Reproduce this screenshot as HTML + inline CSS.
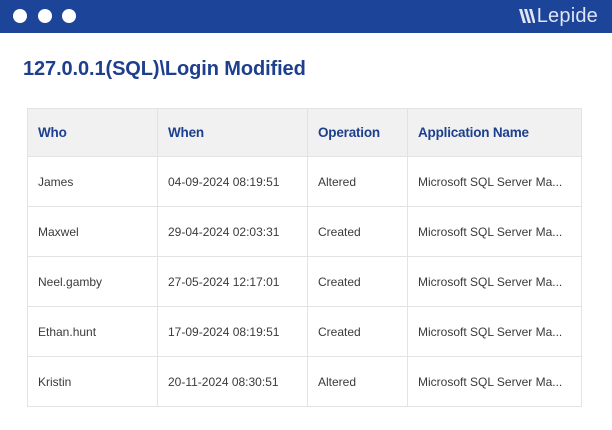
<!DOCTYPE html>
<html><head><style>
*{margin:0;padding:0;box-sizing:border-box}
body{width:612px;height:430px;background:#fff;font-family:"Liberation Sans",sans-serif;position:relative;overflow:hidden}
.bar{position:absolute;left:0;top:0;width:612px;height:33px;background:#1c4499}
.dot{position:absolute;top:9px;width:14px;height:14px;border-radius:50%;background:#fff}
.logo{position:absolute;right:14px;top:5px;color:#dfe5f3;font-size:20px;letter-spacing:0.2px}
h1{position:absolute;left:23px;top:58px;font-size:20px;color:#1d3f8e;font-weight:bold;letter-spacing:-0.1px}
table{position:absolute;left:27px;top:108px;width:555px;border-collapse:collapse}
td,th{border:1px solid #e3e3e3;text-align:left;padding-left:10px;font-size:12px;color:#3a3a3a;height:50px;font-weight:normal}
th{background:#f1f1f1;color:#1d3f8e;font-weight:bold;font-size:13.5px;height:48px;letter-spacing:-0.2px}
</style></head><body>
<div class="bar">
<div class="dot" style="left:13px"></div><div class="dot" style="left:38px"></div><div class="dot" style="left:62px"></div>
<div class="logo"><svg width="16" height="14" viewBox="0 0 16 14" style="vertical-align:-1px;margin-right:2px"><g fill="#dfe5f3"><polygon points="0,0 3,0 7,14 4,14"/><polygon points="5,0 8,0 12,14 9,14"/><polygon points="10,0 13,0 16,12 16,14 14,14"/></g></svg>Lepide</div>
</div>
<h1>127.0.0.1(SQL)\Login Modified</h1>
<table>
<tr><th style="width:130px">Who</th><th style="width:150px">When</th><th style="width:100px">Operation</th><th>Application Name</th></tr>
<tr><td>James</td><td>04-09-2024 08:19:51</td><td>Altered</td><td>Microsoft SQL Server Ma...</td></tr>
<tr><td>Maxwel</td><td>29-04-2024 02:03:31</td><td>Created</td><td>Microsoft SQL Server Ma...</td></tr>
<tr><td>Neel.gamby</td><td>27-05-2024 12:17:01</td><td>Created</td><td>Microsoft SQL Server Ma...</td></tr>
<tr><td>Ethan.hunt</td><td>17-09-2024 08:19:51</td><td>Created</td><td>Microsoft SQL Server Ma...</td></tr>
<tr><td>Kristin</td><td>20-11-2024 08:30:51</td><td>Altered</td><td>Microsoft SQL Server Ma...</td></tr>
</table>
</body></html>
